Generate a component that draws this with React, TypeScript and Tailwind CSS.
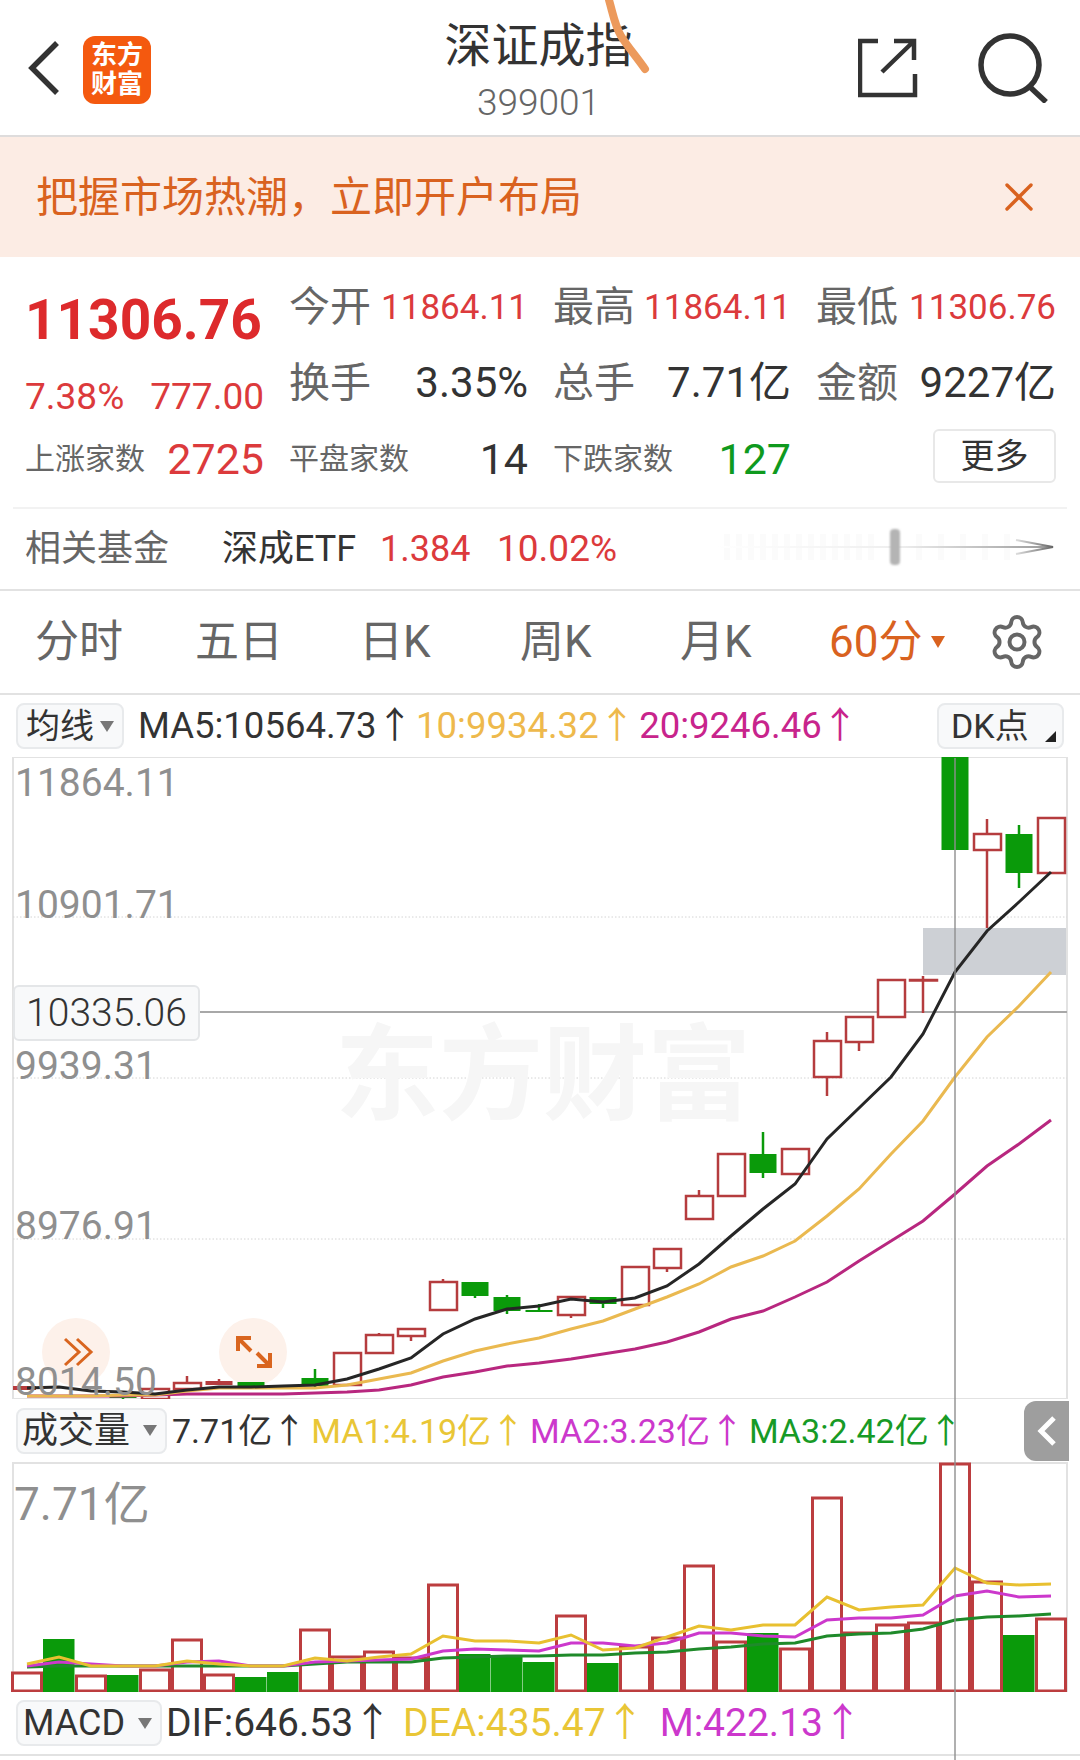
import React from "react";
import { Settings, X } from "lucide-react";

const RED = "text-[#dc3a3c]";

// x is the centre of the slot; all y values are page coordinates
const candles = [
  { x: 123, t: 1395, b: 1399, wt: 1395, wb: 1401, up: false },
  { x: 155, t: 1390, b: 1400, wt: 1390, wb: 1400, up: true },
  { x: 187, t: 1384, b: 1390, wt: 1377, wb: 1390, up: true },
  { x: 219, t: 1382, b: 1386, wt: 1380, wb: 1386, up: true, solid: true },
  { x: 251, t: 1383, b: 1388, wt: 1383, wb: 1388, up: false },
  { x: 315, t: 1379, b: 1387, wt: 1370, wb: 1390, up: false },
  { x: 347, t: 1354, b: 1386, wt: 1354, wb: 1386, up: true },
  { x: 379, t: 1336, b: 1354, wt: 1334, wb: 1354, up: true },
  { x: 411, t: 1330, b: 1337, wt: 1330, wb: 1342, up: true },
  { x: 443, t: 1283, b: 1311, wt: 1280, wb: 1311, up: true },
  { x: 475, t: 1283, b: 1297, wt: 1283, wb: 1299, up: false },
  { x: 507, t: 1298, b: 1312, wt: 1296, wb: 1315, up: false },
  { x: 539, t: 1311, b: 1313, wt: 1305, wb: 1313, up: false },
  { x: 571, t: 1298, b: 1316, wt: 1298, wb: 1319, up: true },
  { x: 603, t: 1298, b: 1305, wt: 1298, wb: 1309, up: false },
  { x: 635, t: 1268, b: 1306, wt: 1268, wb: 1306, up: true },
  { x: 667, t: 1250, b: 1269, wt: 1250, wb: 1273, up: true },
  { x: 699, t: 1197, b: 1220, wt: 1191, wb: 1220, up: true },
  { x: 731, t: 1155, b: 1197, wt: 1155, wb: 1197, up: true },
  { x: 763, t: 1155, b: 1174, wt: 1133, wb: 1179, up: false },
  { x: 795, t: 1150, b: 1175, wt: 1150, wb: 1175, up: true },
  { x: 827, t: 1042, b: 1078, wt: 1033, wb: 1097, up: true },
  { x: 859, t: 1018, b: 1043, wt: 1018, wb: 1052, up: true },
  { x: 891, t: 981, b: 1018, wt: 981, wb: 1018, up: true },
  { x: 923, t: 981, b: 981, wt: 977, wb: 1014, up: true },
  { x: 955, t: 758, b: 851, wt: 758, wb: 851, up: false },
  { x: 987, t: 835, b: 851, wt: 820, wb: 929, up: true },
  { x: 1019, t: 835, b: 874, wt: 826, wb: 889, up: false },
  { x: 1051, t: 819, b: 874, wt: 819, wb: 874, up: true },
];

const slots = Array.from({ length: 33 }, (_, i) => 27 + i * 32);
const toPoints = (ys: number[]) => ys.map((y, i) => `${slots[i]},${y}`).join(" ");

const ma5 = [1389, 1388, 1392, 1393, 1395, 1391, 1388, 1388, 1387, 1386, 1380, 1370, 1359, 1335, 1320, 1310, 1307, 1300, 1303, 1299, 1287, 1265, 1237, 1210, 1185, 1140, 1109, 1078, 1035, 973, 932, 903, 873];
const ma10 = [1397, 1397, 1397, 1396, 1396, 1392, 1389, 1389, 1389, 1389, 1386, 1380, 1374, 1362, 1352, 1345, 1339, 1330, 1322, 1310, 1298, 1285, 1268, 1257, 1242, 1217, 1190, 1155, 1122, 1078, 1038, 1007, 973];
const ma20 = [1397, 1397, 1397, 1397, 1396, 1395, 1395, 1395, 1395, 1394, 1393, 1391, 1386, 1378, 1373, 1367, 1364, 1360, 1355, 1350, 1343, 1333, 1320, 1312, 1298, 1283, 1262, 1242, 1222, 1195, 1167, 1145, 1121];

const volBars = [
  [1673, 1], [1640, 0], [1676, 1], [1676, 0], [1670, 1], [1640, 1], [1675, 1], [1678, 0], [1673, 0], [1630, 1], [1657, 1],
  [1652, 1], [1658, 1], [1585, 1], [1655, 0], [1657, 0], [1663, 0], [1616, 1], [1664, 0], [1647, 1], [1638, 1], [1566, 1],
  [1642, 1], [1634, 0], [1649, 1], [1498, 1], [1633, 1], [1625, 1], [1623, 1], [1464, 1], [1582, 1], [1636, 0], [1619, 1],
];
const volYellow = [1665, 1658, 1667, 1667, 1667, 1662, 1665, 1667, 1667, 1659, 1662, 1658, 1655, 1637, 1642, 1642, 1644, 1636, 1651, 1649, 1638, 1627, 1631, 1626, 1626, 1598, 1611, 1608, 1606, 1569, 1584, 1586, 1585];
const volPurple = [1667, 1663, 1665, 1667, 1667, 1663, 1662, 1667, 1667, 1663, 1662, 1661, 1660, 1652, 1650, 1651, 1652, 1644, 1644, 1647, 1644, 1634, 1634, 1637, 1638, 1621, 1619, 1619, 1616, 1597, 1592, 1598, 1597];
const volGreen = [1668, 1667, 1667, 1667, 1667, 1667, 1667, 1667, 1667, 1665, 1663, 1663, 1663, 1659, 1658, 1657, 1657, 1656, 1656, 1654, 1653, 1650, 1648, 1645, 1644, 1637, 1635, 1634, 1630, 1621, 1618, 1617, 1615];

const axisLabels = [
  { text: "11864.11", cls: "top-[4px]" },
  { text: "10901.71", cls: "top-[126px]" },
  { text: "9939.31", cls: "top-[287px]" },
  { text: "8976.91", cls: "top-[447px]" },
  { text: "8014.50", cls: "top-[603px]" },
];

function Cell({ label, value, labelCls, valueCls }: { label: string; value: string; labelCls: string; valueCls: string }) {
  return (
    <div className="flex items-center justify-between whitespace-nowrap">
      <span className={labelCls}>{label}</span>
      <span className={valueCls}>{value}</span>
    </div>
  );
}

function Dropdown({ label, className }: { label: string; className: string }) {
  return (
    <div className={`flex items-center rounded-lg border-2 border-[#e8eaec] bg-[#f8f9fa] text-[#333] ${className}`}>
      {label}
      <span className="ml-auto mr-[8px] h-0 w-0 border-x-[7px] border-t-[11px] border-x-transparent border-t-[#777]" />
    </div>
  );
}

function MainChart() {
  return (
    <div className="relative h-[642px] w-full">
      <svg viewBox="0 758 1080 642" className="block h-[642px] w-[1080px]">
        <rect x="923" y="929" width="144" height="47" fill="#cdd0d5" />
        <rect x="13" y="758" width="1054" height="642" fill="none" stroke="#e2e2e2" strokeWidth="2" />
        {[918, 1079, 1240].map((y) => (
          <line key={y} x1="13" x2="1067" y1={y} y2={y} stroke="#d4d4d4" strokeDasharray="1.5 2" />
        ))}
        <line x1="200" x2="1067" y1="1013" y2="1013" stroke="#a8a8a8" strokeWidth="2" />
        <circle cx="76" cy="1353" r="34" fill="#fdf1ea" />
        <circle cx="253" cy="1353" r="34" fill="#fdf1ea" />
        <path d="M65 1340l14 13-14 13M77 1340l14 13-14 13" fill="none" stroke="#d9651f" strokeWidth="3" />
        <path d="M238 1352v-13h13M238 1339l13 13M270 1354v13h-13M270 1367l-13-13" fill="none" stroke="#d9651f" strokeWidth="4" />
        <line x1="13" x2="36" y1="1389" y2="1389" stroke="#b73c3c" strokeWidth="4" />
        {candles.map((c) => {
          const color = c.up ? "#b53c3e" : "#0a9a0a";
          return (
            <g key={c.x}>
              <line x1={c.x} x2={c.x} y1={c.wt} y2={c.wb} stroke={color} strokeWidth="2.5" />
              {c.up && !c.solid ? (
                <rect x={c.x - 13} y={c.t} width="27" height={Math.max(c.b - c.t, 0.5)} fill="#fff" stroke={color} strokeWidth="2.5" />
              ) : (
                <rect x={c.x - 13.5} y={c.t} width="27" height={c.b - c.t} fill={color} />
              )}
            </g>
          );
        })}
        <polyline points={toPoints(ma20)} fill="none" stroke="#b8277f" strokeWidth="3" />
        <polyline points={toPoints(ma10)} fill="none" stroke="#eab950" strokeWidth="3" />
        <polyline points={toPoints(ma5)} fill="none" stroke="#262626" strokeWidth="3" />
      </svg>
      <div className="absolute left-[335px] top-[268px] whitespace-nowrap text-[104px] font-bold leading-none text-[#f6f6f6]">东方财富</div>
      {axisLabels.map((l) => (
        <div key={l.text} className={`absolute left-[15px] text-[39px] leading-[44px] text-[#8f8f8f] ${l.cls}`}>
          {l.text}
        </div>
      ))}
      <div className="absolute left-[13px] top-[228px] flex h-[56px] w-[187px] items-center justify-center rounded-md border-2 border-[#e4e6e8] bg-[#f8f9fa] text-[39px] font-light text-[#333]">
        10335.06
      </div>
    </div>
  );
}

function VolumeChart() {
  return (
    <div className="relative h-[230px] w-full">
      <svg viewBox="0 1463 1080 230" className="block h-[230px] w-[1080px]">
        <rect x="13" y="1464" width="1054" height="229" fill="none" stroke="#e2e2e2" strokeWidth="2" />
        {volBars.map(([top, up], i) => {
          const x = slots[i] - 16;
          return up ? (
            <rect key={i} x={x + 1.5} y={top + 1} width="29" height={1691 - top} fill="#fff" stroke="#bc3d3f" strokeWidth="3" />
          ) : (
            <rect key={i} x={x} y={top} width="31.5" height={1693 - top} fill="#0a9a0a" />
          );
        })}
        <polyline points={toPoints(volGreen)} fill="none" stroke="#1f8a2a" strokeWidth="3" />
        <polyline points={toPoints(volPurple)} fill="none" stroke="#cc38cc" strokeWidth="3" />
        <polyline points={toPoints(volYellow)} fill="none" stroke="#e8c030" strokeWidth="3" />
      </svg>
      <div className="absolute left-[14px] top-[16px] text-[46px] leading-[52px] text-[#8f8f8f]">7.71亿</div>
    </div>
  );
}

export default function App() {
  const label = "text-[41px] leading-none text-[#666]";
  const small = "text-[30px] leading-none text-[#666]";
  const quote = `text-[35px] leading-none ${RED}`;
  const dark = "text-[42px] leading-none text-[#333]";
  return (
    <div className="relative h-[1760px] w-[1080px] overflow-hidden bg-white font-['Roboto','Noto_Sans_CJK_SC',sans-serif]">
      <header className="flex h-[137px] items-center border-b-2 border-[#dedcdc] pl-[28px] pr-[32px]">
        <svg width="32" height="54" viewBox="0 0 32 54" fill="none" stroke="#333" strokeWidth="5.5">
          <path d="M29 2 4 27l25 25" />
        </svg>
        <div className="ml-[23px] mt-[4px] flex h-[68px] w-[68px] flex-col items-center justify-center rounded-xl bg-[#f4590f] text-[26px] font-bold leading-[29px] text-white">
          <span>东方</span>
          <span>财富</span>
        </div>
        <div className="flex flex-1 flex-col items-center pl-[68px] pt-[6px]">
          <div className="text-[47px] leading-[56px] text-[#333]">深证成指</div>
          <div className="mt-[9px] text-[37px] font-light leading-[40px] text-[#666]">399001</div>
        </div>
        <svg width="60" height="60" viewBox="0 0 60 60" fill="none" stroke="#333" strokeWidth="4.5" className="mr-[60px]">
          <path d="M20 3H2v54h55V36M24 34 56 3M36 3h20v19" />
        </svg>
        <svg width="70" height="70" viewBox="0 0 70 70" fill="none" stroke="#333" strokeWidth="5.5">
          <circle cx="32" cy="32" r="29" />
          <path d="m52 54 16 15" />
        </svg>
      </header>

      <div className="flex h-[120px] items-center justify-between bg-[#fcece4] pl-[36px] pr-[37px]">
        <span className="text-[42px] text-[#d9621f]">把握市场热潮，立即开户布局</span>
        <X size={48} strokeWidth={1.7} color="#d9621f" />
      </div>

      <section className="grid h-[250px] grid-cols-[239px_239px_238px_240px] grid-rows-[50px_50px_50px] gap-x-[25px] gap-y-[26px] pl-[25px] pt-[25px]">
        <div className="flex items-center whitespace-nowrap pt-[26px] text-[55px] font-bold leading-none text-[#dd2a2c]">11306.76</div>
        <Cell label="今开" value="11864.11" labelCls={label} valueCls={quote} />
        <Cell label="最高" value="11864.11" labelCls={label} valueCls={quote} />
        <Cell label="最低" value="11306.76" labelCls={label} valueCls={quote} />

        <div className="pt-[20px]">
          <Cell label="7.38%" value="777.00" labelCls={`text-[37px] leading-none ${RED}`} valueCls={`text-[37px] leading-none ${RED}`} />
        </div>
        <Cell label="换手" value="3.35%" labelCls={label} valueCls={dark} />
        <Cell label="总手" value="7.71亿" labelCls={label} valueCls={dark} />
        <Cell label="金额" value="9227亿" labelCls={label} valueCls={dark} />

        <Cell label="上涨家数" value="2725" labelCls={small} valueCls={`text-[43px] leading-none ${RED}`} />
        <Cell label="平盘家数" value="14" labelCls={small} valueCls="text-[43px] leading-none text-[#333]" />
        <Cell label="下跌家数" value="127" labelCls={small} valueCls="text-[43px] leading-none text-[#0f9a1e]" />
        <div className="flex justify-end">
          <div className="-mt-[5px] flex h-[54px] w-[123px] items-center justify-center rounded-md border-2 border-[#e8e8e8] text-[34px] text-[#333]">更多</div>
        </div>
      </section>

      <div className="mx-[13px] h-[2px] bg-[#f2f2f2]" />

      <div className="flex h-[82px] items-center border-b-2 border-[#e2e2e2] pl-[25px] pr-[24px]">
        <span className="w-[197px] text-[36px] text-[#666]">相关基金</span>
        <span className="w-[158px] text-[36px] text-[#333]">深成ETF</span>
        <span className={`w-[117px] text-[36px] ${RED}`}>1.384</span>
        <span className={`text-[37px] ${RED}`}>10.02%</span>
        <svg width="340" height="50" viewBox="0 0 340 50" fill="none" className="ml-auto -mt-[4px]">
          <defs>
            <linearGradient id="smear" x1="0" x2="1" y1="0" y2="0">
              <stop offset="0" stopColor="#fff" />
              <stop offset="0.55" stopColor="#eee" />
              <stop offset="1" stopColor="#999" />
            </linearGradient>
            <linearGradient id="head" x1="0" x2="1" y1="0" y2="0">
              <stop offset="0" stopColor="#ddd" />
              <stop offset="1" stopColor="#666" />
            </linearGradient>
          </defs>
          {[8, 20, 32, 44, 56, 68, 80, 92, 104, 116, 128, 140, 152, 200, 222, 244, 266, 288].map((x) => (
            <rect key={x} x={x} y="12" width="6" height="26" fill="#fbfbfb" />
          ))}
          <rect x="0" y="24" width="336" height="2" fill="url(#smear)" />
          <path d="m300 18 37 7-37 7" stroke="url(#head)" strokeWidth="2" />
          <rect x="174" y="7" width="10" height="36" rx="4" fill="#b4b4b4" className="blur-[1px]" />
        </svg>
      </div>

      <nav className="flex h-[104px] items-center border-b-2 border-[#e2e2e2] text-[44px] text-[#666]">
        <span className="ml-[35px] w-[160px] whitespace-nowrap">分时</span>
        <span className="w-[164px] whitespace-nowrap">五日</span>
        <span className="w-[161px] whitespace-nowrap">日K</span>
        <span className="w-[160px] whitespace-nowrap">周K</span>
        <span className="w-[149px] whitespace-nowrap">月K</span>
        <span className="whitespace-nowrap text-[#d9621f]">60分</span>
        <span className="ml-[9px] h-0 w-0 border-x-[7px] border-t-[12px] border-x-transparent border-t-[#d9621f]" />
        <Settings size={60} strokeWidth={1.6} color="#666" className="ml-[42px]" />
      </nav>

      <div className="flex h-[62px] items-center whitespace-nowrap pl-[16px] text-[36.5px] leading-none">
        <Dropdown label="均线" className="h-[46px] w-[108px] pl-[8px] text-[34px]" />
        <span className="ml-[14px] text-[#333]">MA5:10564.73↑</span>
        <span className="ml-[3px] text-[#eeb94c]">10:9934.32↑</span>
        <span className="ml-[4px] text-[#c8248c]">20:9246.46↑</span>
        <div className="relative ml-auto mr-[16px] flex h-[46px] w-[127px] items-center rounded-lg border-2 border-[#e8eaec] bg-[#f8f9fa] pl-[12px] text-[34px] text-[#333]">
          DK点
          <span className="absolute bottom-[5px] right-[6px] h-0 w-0 border-b-[11px] border-l-[11px] border-b-[#222] border-l-transparent" />
        </div>
      </div>

      <MainChart />

      <div className="relative flex h-[63px] items-center whitespace-nowrap pl-[16px] text-[34px] leading-none">
        <Dropdown label="成交量" className="h-[46px] w-[151px] pl-[4px] text-[36px]" />
        <span className="ml-[5px] text-[#333]">7.71亿↑</span>
        <span className="ml-[5px] text-[#e9c636]">MA1:4.19亿↑</span>
        <span className="ml-[5px] text-[#cc38cc]">MA2:3.23亿↑</span>
        <span className="ml-[5px] text-[#179a26]">MA3:2.42亿↑</span>
        <div className="absolute right-[11px] top-[2px] flex h-[60px] w-[45px] items-center justify-center rounded-l-xl bg-[#9e9e9e]">
          <svg width="20" height="30" viewBox="0 0 20 30" fill="none" stroke="#fff" strokeWidth="5">
            <path d="M17 2 4 15l13 13" />
          </svg>
        </div>
      </div>

      <VolumeChart />

      <div className="flex h-[64px] items-center whitespace-nowrap border-b-2 border-[#e2e2e2] pl-[16px] text-[39px] leading-none">
        <Dropdown label="MACD" className="h-[46px] w-[146px] pl-[5px] text-[36px]" />
        <span className="ml-[4px] text-[#333]">DIF:646.53↑</span>
        <span className="ml-[11px] text-[#e9c636]">DEA:435.47↑</span>
        <span className="ml-[15px] text-[#cc38cc]">M:422.13↑</span>
      </div>

      {/* crosshair runs over all three panes */}
      <div className="absolute bottom-0 left-[954px] top-[758px] w-[2px] bg-[#8f8f8f]/70" />

      {/* pen scribble over the title */}
      <svg width="60" height="80" viewBox="0 0 60 80" fill="none" className="absolute left-[600px] top-0">
        <path d="M9 0C13 14 15 26 21 36s15 20 24 33" stroke="#ec9a5c" strokeWidth="8" strokeLinecap="round" />
      </svg>
    </div>
  );
}
